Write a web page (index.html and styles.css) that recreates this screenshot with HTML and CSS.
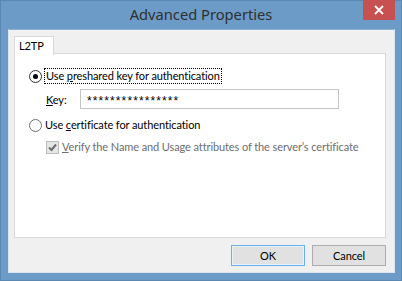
FILE: index.html
```html
<!DOCTYPE html>
<html>
<head>
<meta charset="utf-8">
<link rel="stylesheet" href="styles.css">
</head>
<body>
<div class="window">
  <div class="titlebar">
    <span></span>
    <div class="title">Advanced Properties</div>
    <div class="close"><svg width="10" height="10" viewBox="0 0 10 10"><path d="M1 1 L9 9 M9 1 L1 9" stroke="#fff" stroke-width="1.8"/></svg></div>
  </div>
  <div class="client">
    <div class="tabs">
      <div class="tab">L2TP</div>
    </div>
    <div class="panel">
      <div class="row r1">
        <span class="radio checked"><span class="dot"></span></span>
        <span class="label focus">Use <u>p</u>reshared key for authentication</span>
      </div>
      <div class="row keyrow">
        <span class="keylabel"><u>K</u>ey:</span>
        <div class="input">****************</div>
      </div>
      <div class="row r2">
        <span class="radio"></span>
        <span class="label">Use <u>c</u>ertificate for authentication</span>
      </div>
      <div class="row r3">
        <span class="check"><svg width="11" height="11" viewBox="0 0 11 11"><path d="M2 5.5 L4.5 8 L9 2.5" fill="none" stroke="#6d6d6d" stroke-width="2"/></svg></span>
        <span class="label disabled"><u>V</u>erify the Name and Usage attributes of the server’s certificate</span>
      </div>
    </div>
    <div class="buttons">
      <div class="btn default">OK</div>
      <div class="btn">Cancel</div>
    </div>
  </div>
</div>
</body>
</html>
```
FILE: styles.css
```css
html, body {
  margin: 0;
  padding: 0;
}
body {
  width: 402px;
  height: 281px;
  background: #6b9bc6;
  font-family: Lato, "Liberation Sans", sans-serif;
  font-size: 11px;
  letter-spacing: -0.1px;
  color: #000;
  overflow: hidden;
}
.window {
  width: 402px;
  height: 281px;
  display: flex;
  flex-direction: column;
  box-sizing: border-box;
  border: 1px solid #5a88b2;
}
.titlebar {
  height: 29px;
  display: grid;
  grid-template-columns: 1fr auto 1fr;
  align-items: start;
}
.title {
  font-family: "Noto Sans", sans-serif;
  font-size: 14.7px;
  letter-spacing: 0;
  color: #303030;
  line-height: 29px;
  margin-top: -1px;
}
.close {
  justify-self: end;
  width: 32px;
  height: 20px;
  margin-right: 6px;
  margin-top: -1px;
  background: #c75050;
  display: flex;
  align-items: center;
  justify-content: center;
}
.client {
  margin: 0 6px 7px 7px;
  flex: 1;
  background: #f0f0f0;
  padding: 6px 8px 6px 5px;
  display: flex;
  flex-direction: column;
  border: 1px solid #d9e4ee;
  border-top-color: #8eb0d0;
  box-sizing: border-box;
}
.tabs {
  display: flex;
  height: 17px;
  position: relative;
  z-index: 1;
}
.tab {
  width: 34px;
  height: 18px;
  background: #fff;
  border: 1px solid #d9d9d9;
  border-bottom: none;
  padding-left: 4px;
  line-height: 18px;
  box-sizing: content-box;
}
.panel {
  height: 185px;
  background: #fff;
  border: 1px solid #d9d9d9;
  box-sizing: border-box;
  padding: 14px 0 0 14px;
  display: flex;
  flex-direction: column;
}
.row {
  display: flex;
  align-items: center;
  height: 16px;
}
.keyrow { margin-top: 5px; height: 20px; padding-left: 17px; }
.r2 { margin-top: 8px; }
.r3 { margin-top: 6px; padding-left: 17px; }
.radio {
  width: 13px;
  height: 13px;
  box-sizing: border-box;
  border-radius: 50%;
  border: 1px solid #333;
  background: #fff;
  display: flex;
  align-items: center;
  justify-content: center;
  margin-right: 3px;
}
.radio:not(.checked) { border-color: #707070; }
.dot {
  width: 5px;
  height: 5px;
  border-radius: 50%;
  background: #000;
}
.label { white-space: nowrap; line-height: 14px; }
.focus { outline: 1px dotted #000; padding: 0 1px; }
.disabled { color: #6d6d6d; margin-left: 3px; }
.keylabel { width: 34px; }
.input {
  width: 259px;
  height: 20px;
  box-sizing: border-box;
  border: 1px solid #c5c5c5;
  background: #fff;
  padding: 3px 0 0 6px;
  font-family: "Liberation Sans", sans-serif;
  font-size: 12px;
  letter-spacing: 1.1px;
  line-height: 16px;
}
.check {
  width: 13px;
  height: 13px;
  box-sizing: border-box;
  border: 1px solid #bcbcbc;
  background: #e6e6e6;
  display: flex;
  align-items: center;
  justify-content: center;
}
.buttons {
  display: flex;
  justify-content: flex-end;
  gap: 7px;
  margin-top: 7px;
}
.btn {
  width: 74px;
  height: 21px;
  box-sizing: border-box;
  border: 1px solid #adadad;
  background: #e1e1e1;
  text-align: center;
  line-height: 19px;
}
.btn.default {
  border-color: #6ab0f0;
  box-shadow: inset 0 0 0 1px #e5f1fb;
}
```
